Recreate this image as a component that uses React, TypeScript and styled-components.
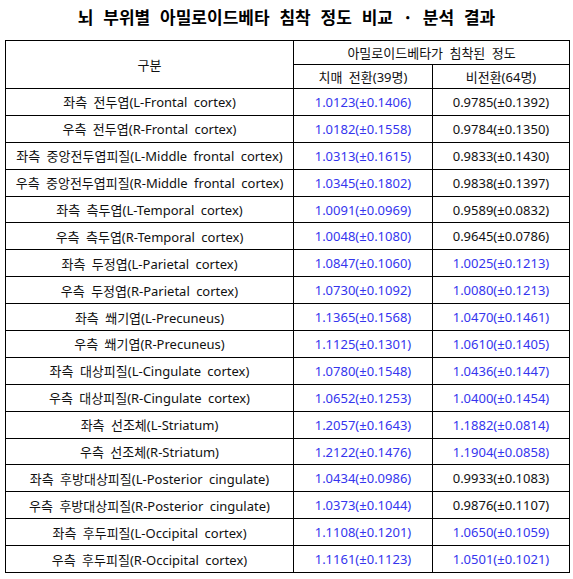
import styled, { createGlobalStyle } from "styled-components";

const GlobalStyle = createGlobalStyle`
  html, body {
    margin: 0;
    padding: 0;
    background: #ffffff;
  }
  body {
    font-family: "Noto Sans", "Noto Sans CJK KR", sans-serif;
    color: #111111;
  }
`;

const Page = styled.div`
  width: 573px;
  padding: 6px 0 0 5px;
  box-sizing: border-box;
`;

const Title = styled.h1`
  margin: 0 5px 0 0;
  height: 34px;
  text-align: center;
  font-family: "Noto Sans CJK KR", sans-serif;
  font-size: 17px;
  font-weight: 700;
  word-spacing: 6px;
  line-height: 22px;
  color: #000;
`;

const Table = styled.table`
  width: 564px;
  border-collapse: collapse;
  table-layout: fixed;
  border: 1px solid #000;
  font-size: 13px;
`;

const HeadCell = styled.th`
  border: 1px solid #000;
  font-weight: 400;
  height: 23px;
  padding: 0;
  text-align: center;
  color: #111;
  word-spacing: 3px;
`;

const Row = styled.tr`
  height: 26.9px;
`;

const NameCell = styled.td`
  border: 1px solid #000;
  padding: 0;
  text-align: center;
  white-space: nowrap;
  color: #111;
  word-spacing: 3px;
`;

const ValueCell = styled.td<{ $up: boolean }>`
  border: 1px solid #000;
  padding: 0;
  text-align: center;
  white-space: nowrap;
  color: ${(p) => (p.$up ? "#3535ee" : "#111")};
`;

type Item = { ko: string; en: string; a: [number, number]; b: [number, number] };

const rows: Item[] = [
  { ko: "좌측 전두엽", en: "L-Frontal cortex", a: [1.0123, 0.1406], b: [0.9785, 0.1392] },
  { ko: "우측 전두엽", en: "R-Frontal cortex", a: [1.0182, 0.1558], b: [0.9784, 0.135] },
  { ko: "좌측 중앙전두엽피질", en: "L-Middle frontal cortex", a: [1.0313, 0.1615], b: [0.9833, 0.143] },
  { ko: "우측 중앙전두엽피질", en: "R-Middle frontal cortex", a: [1.0345, 0.1802], b: [0.9838, 0.1397] },
  { ko: "좌측 측두엽", en: "L-Temporal cortex", a: [1.0091, 0.0969], b: [0.9589, 0.0832] },
  { ko: "우측 측두엽", en: "R-Temporal cortex", a: [1.0048, 0.108], b: [0.9645, 0.0786] },
  { ko: "좌측 두정엽", en: "L-Parietal cortex", a: [1.0847, 0.106], b: [1.0025, 0.1213] },
  { ko: "우측 두정엽", en: "R-Parietal cortex", a: [1.073, 0.1092], b: [1.008, 0.1213] },
  { ko: "좌측 쐐기엽", en: "L-Precuneus", a: [1.1365, 0.1568], b: [1.047, 0.1461] },
  { ko: "우측 쐐기엽", en: "R-Precuneus", a: [1.1125, 0.1301], b: [1.061, 0.1405] },
  { ko: "좌측 대상피질", en: "L-Cingulate cortex", a: [1.078, 0.1548], b: [1.0436, 0.1447] },
  { ko: "우측 대상피질", en: "R-Cingulate cortex", a: [1.0652, 0.1253], b: [1.04, 0.1454] },
  { ko: "좌측 선조체", en: "L-Striatum", a: [1.2057, 0.1643], b: [1.1882, 0.0814] },
  { ko: "우측 선조체", en: "R-Striatum", a: [1.2122, 0.1476], b: [1.1904, 0.0858] },
  { ko: "좌측 후방대상피질", en: "L-Posterior cingulate", a: [1.0434, 0.0986], b: [0.9933, 0.1083] },
  { ko: "우측 후방대상피질", en: "R-Posterior cingulate", a: [1.0373, 0.1044], b: [0.9876, 0.1107] },
  { ko: "좌측 후두피질", en: "L-Occipital cortex", a: [1.1108, 0.1201], b: [1.065, 0.1059] },
  { ko: "우측 후두피질", en: "R-Occipital cortex", a: [1.1161, 0.1123], b: [1.0501, 0.1021] },
];

const fmt = ([m, sd]: [number, number]) => `${m.toFixed(4)}(±${sd.toFixed(4)})`;

export default function App() {
  return (
    <>
      <GlobalStyle />
      <Page>
        <Title>뇌 부위별 아밀로이드베타 침착 정도 비교 · 분석 결과</Title>
        <Table>
          <colgroup>
            <col style={{ width: 288 }} />
            <col style={{ width: 139 }} />
            <col style={{ width: 137 }} />
          </colgroup>
          <thead>
            <tr>
              <HeadCell rowSpan={2}>구분</HeadCell>
              <HeadCell colSpan={2}>아밀로이드베타가 침착된 정도</HeadCell>
            </tr>
            <tr>
              <HeadCell>치매 전환(39명)</HeadCell>
              <HeadCell>비전환(64명)</HeadCell>
            </tr>
          </thead>
          <tbody>
            {rows.map((r) => (
              <Row key={r.en}>
                <NameCell>
                  {r.ko}({r.en})
                </NameCell>
                <ValueCell $up={r.a[0] >= 1}>{fmt(r.a)}</ValueCell>
                <ValueCell $up={r.b[0] >= 1}>{fmt(r.b)}</ValueCell>
              </Row>
            ))}
          </tbody>
        </Table>
      </Page>
    </>
  );
}
